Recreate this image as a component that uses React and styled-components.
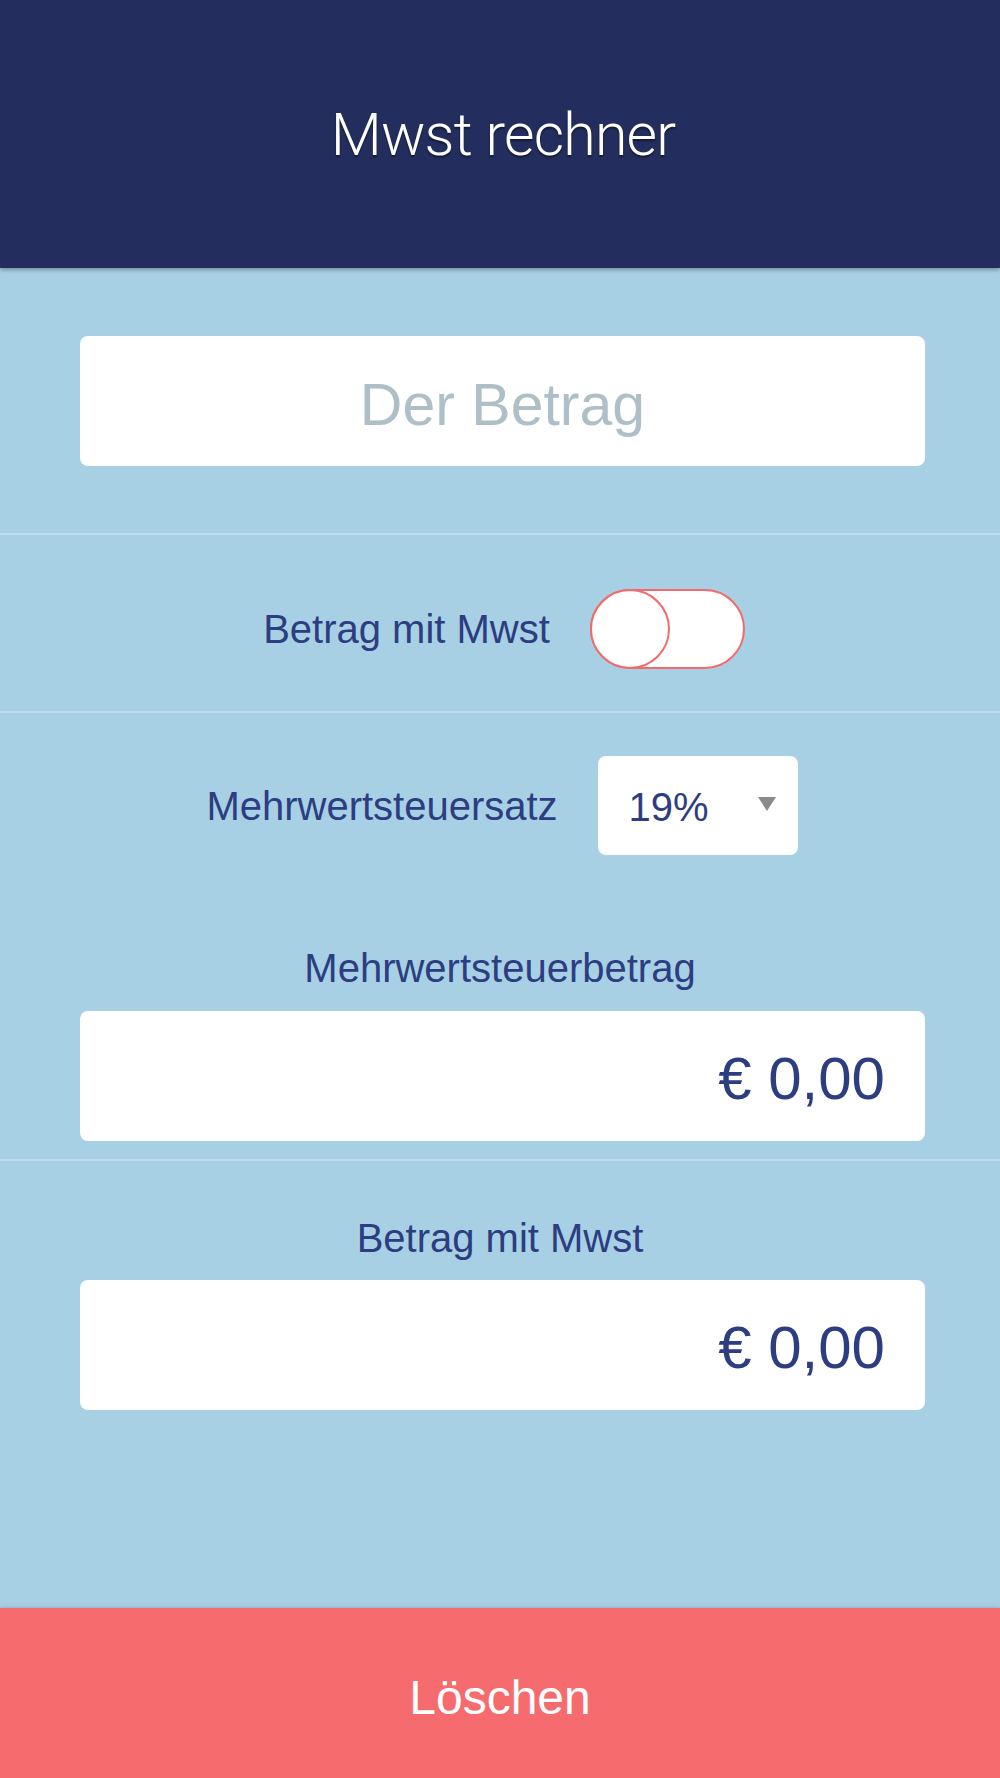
import React, { useState } from 'react'
import styled, { createGlobalStyle } from 'styled-components'

const GlobalStyle = createGlobalStyle`
    html, body {
        margin: 0;
        padding: 0;
        background-color: #a8d0e4;
        font-family: "Liberation Sans", Arial, sans-serif;
    }
    * {
        box-sizing: border-box;
    }
`

const Page = styled.div`
    width: 100%;
    min-height: 1778px;
    display: flex;
    flex-direction: column;
    background-color: #a8d0e4;
`
const Header = styled.header`
    height: 268px;
    display: flex;
    align-items: center;
    justify-content: center;
    background-color: #232e5e;
    box-shadow: 0 2px 4px rgba(0, 0, 0, 0.3);
    position: relative;
    z-index: 1;
`
const Title = styled.h1`
    margin: 0 0 0 6px;
    font-family: Roboto, "Liberation Sans", sans-serif;
    font-weight: 300;
    font-size: 59px;
    letter-spacing: -0.8px;
    color: #ffffff;
    text-shadow: 0 2px 2px rgba(0, 0, 0, 0.45);
`
const Main = styled.main`
    flex: 1;
    display: flex;
    flex-direction: column;
`
const Section = styled.section`
    display: flex;
    flex-direction: column;
    align-items: center;
    padding: ${props => props.pad};
    border-bottom: ${props => props.last ? "none" : "2px solid #bcdbeb"};
`
const AmountInput = styled.input`
    width: 845px;
    height: 130px;
    margin-left: 5px;
    padding: 8px 0 0;
    border: none;
    border-radius: 8px;
    background-color: #ffffff;
    font-family: "Liberation Sans", Arial, sans-serif;
    font-size: 59px;
    color: #2d3d82;
    text-align: center;
    outline: none;
    &::placeholder {
        color: #afbfc8;
    }
`
const Row = styled.div`
    display: flex;
    align-items: center;
    justify-content: center;
    gap: 40px;
    margin-left: ${props => props.shift || "0"};
`
const Label = styled.span`
    font-size: 40px;
    line-height: 48px;
    color: #2d3d82;
    margin-top: ${props => props.mt || "0"};
    margin-bottom: ${props => props.mb || "0"};
`
const Toggle = styled.button`
    width: 155px;
    height: 80px;
    padding: 0;
    display: flex;
    align-items: center;
    justify-content: ${props => props.on ? "flex-end" : "flex-start"};
    border: 2px solid #f26a6b;
    border-radius: 40px;
    background-color: ${props => props.on ? "#f66b6d" : "#ffffff"};
    cursor: pointer;
`
const Knob = styled.span`
    width: 80px;
    height: 80px;
    margin: -2px;
    border: 2px solid #f26a6b;
    border-radius: 50%;
    background-color: #ffffff;
`
const Select = styled.div`
    width: 200px;
    height: 99px;
    display: flex;
    align-items: center;
    justify-content: space-between;
    padding: 4px 22px 0 31px;
    border-radius: 8px;
    background-color: #ffffff;
    font-size: 40px;
    color: #2d3d82;
    cursor: pointer;
`
const Caret = styled.span`
    width: 0;
    height: 0;
    border-left: 9px solid transparent;
    border-right: 9px solid transparent;
    border-top: 14px solid #8a8a8a;
    margin-bottom: 8px;
`
const ResultBox = styled.div`
    width: 845px;
    height: 130px;
    margin-left: 5px;
    display: flex;
    align-items: center;
    justify-content: flex-end;
    padding: 6px 40px 0 0;
    border-radius: 8px;
    background-color: #ffffff;
    font-size: 60px;
    line-height: 60px;
    color: #2d3d82;
`
const Footer = styled.button`
    height: 170px;
    width: 100%;
    padding: 8px 0 0;
    border: none;
    background-color: #f66b6d;
    box-shadow: 0 -1px 3px rgba(0, 0, 0, 0.15);
    font-family: "Liberation Sans", Arial, sans-serif;
    font-size: 48px;
    color: #ffffff;
    cursor: pointer;
`

const App = () => {
    const [amount, setAmount] = useState("")
    const [withVat, setWithVat] = useState(false)
    const rate = 19

    const value = parseFloat(amount.replace(",", ".")) || 0
    const vat = withVat ? value - value / (1 + rate / 100) : value * rate / 100
    const total = withVat ? value : value + vat
    const fmt = (n) => "€ " + n.toFixed(2).replace(".", ",")

    return (
        <Page>
            <GlobalStyle />
            <Header>
                <Title>Mwst rechner</Title>
            </Header>
            <Main>
                <Section pad="68px 0 67px">
                    <AmountInput
                        placeholder="Der Betrag"
                        value={amount}
                        onChange={(e) => setAmount(e.target.value)}
                    />
                </Section>
                <Section pad="54px 0 42px">
                    <Row shift="8px">
                        <Label>Betrag mit Mwst</Label>
                        <Toggle on={withVat} onClick={() => setWithVat(!withVat)}>
                            <Knob />
                        </Toggle>
                    </Row>
                </Section>
                <Section pad="43px 0 18px">
                    <Row shift="4px">
                        <Label>Mehrwertsteuersatz</Label>
                        <Select>
                            {rate}%
                            <Caret />
                        </Select>
                    </Row>
                    <Label mt="89px" mb="19px">Mehrwertsteuerbetrag</Label>
                    <ResultBox>{fmt(vat)}</ResultBox>
                </Section>
                <Section pad="53px 0 0" last>
                    <Label mb="18px">{withVat ? "Betrag ohne Mwst" : "Betrag mit Mwst"}</Label>
                    <ResultBox>{fmt(withVat ? value - vat : total)}</ResultBox>
                </Section>
            </Main>
            <Footer onClick={() => setAmount("")}>Löschen</Footer>
        </Page>
    )
}

export default App
